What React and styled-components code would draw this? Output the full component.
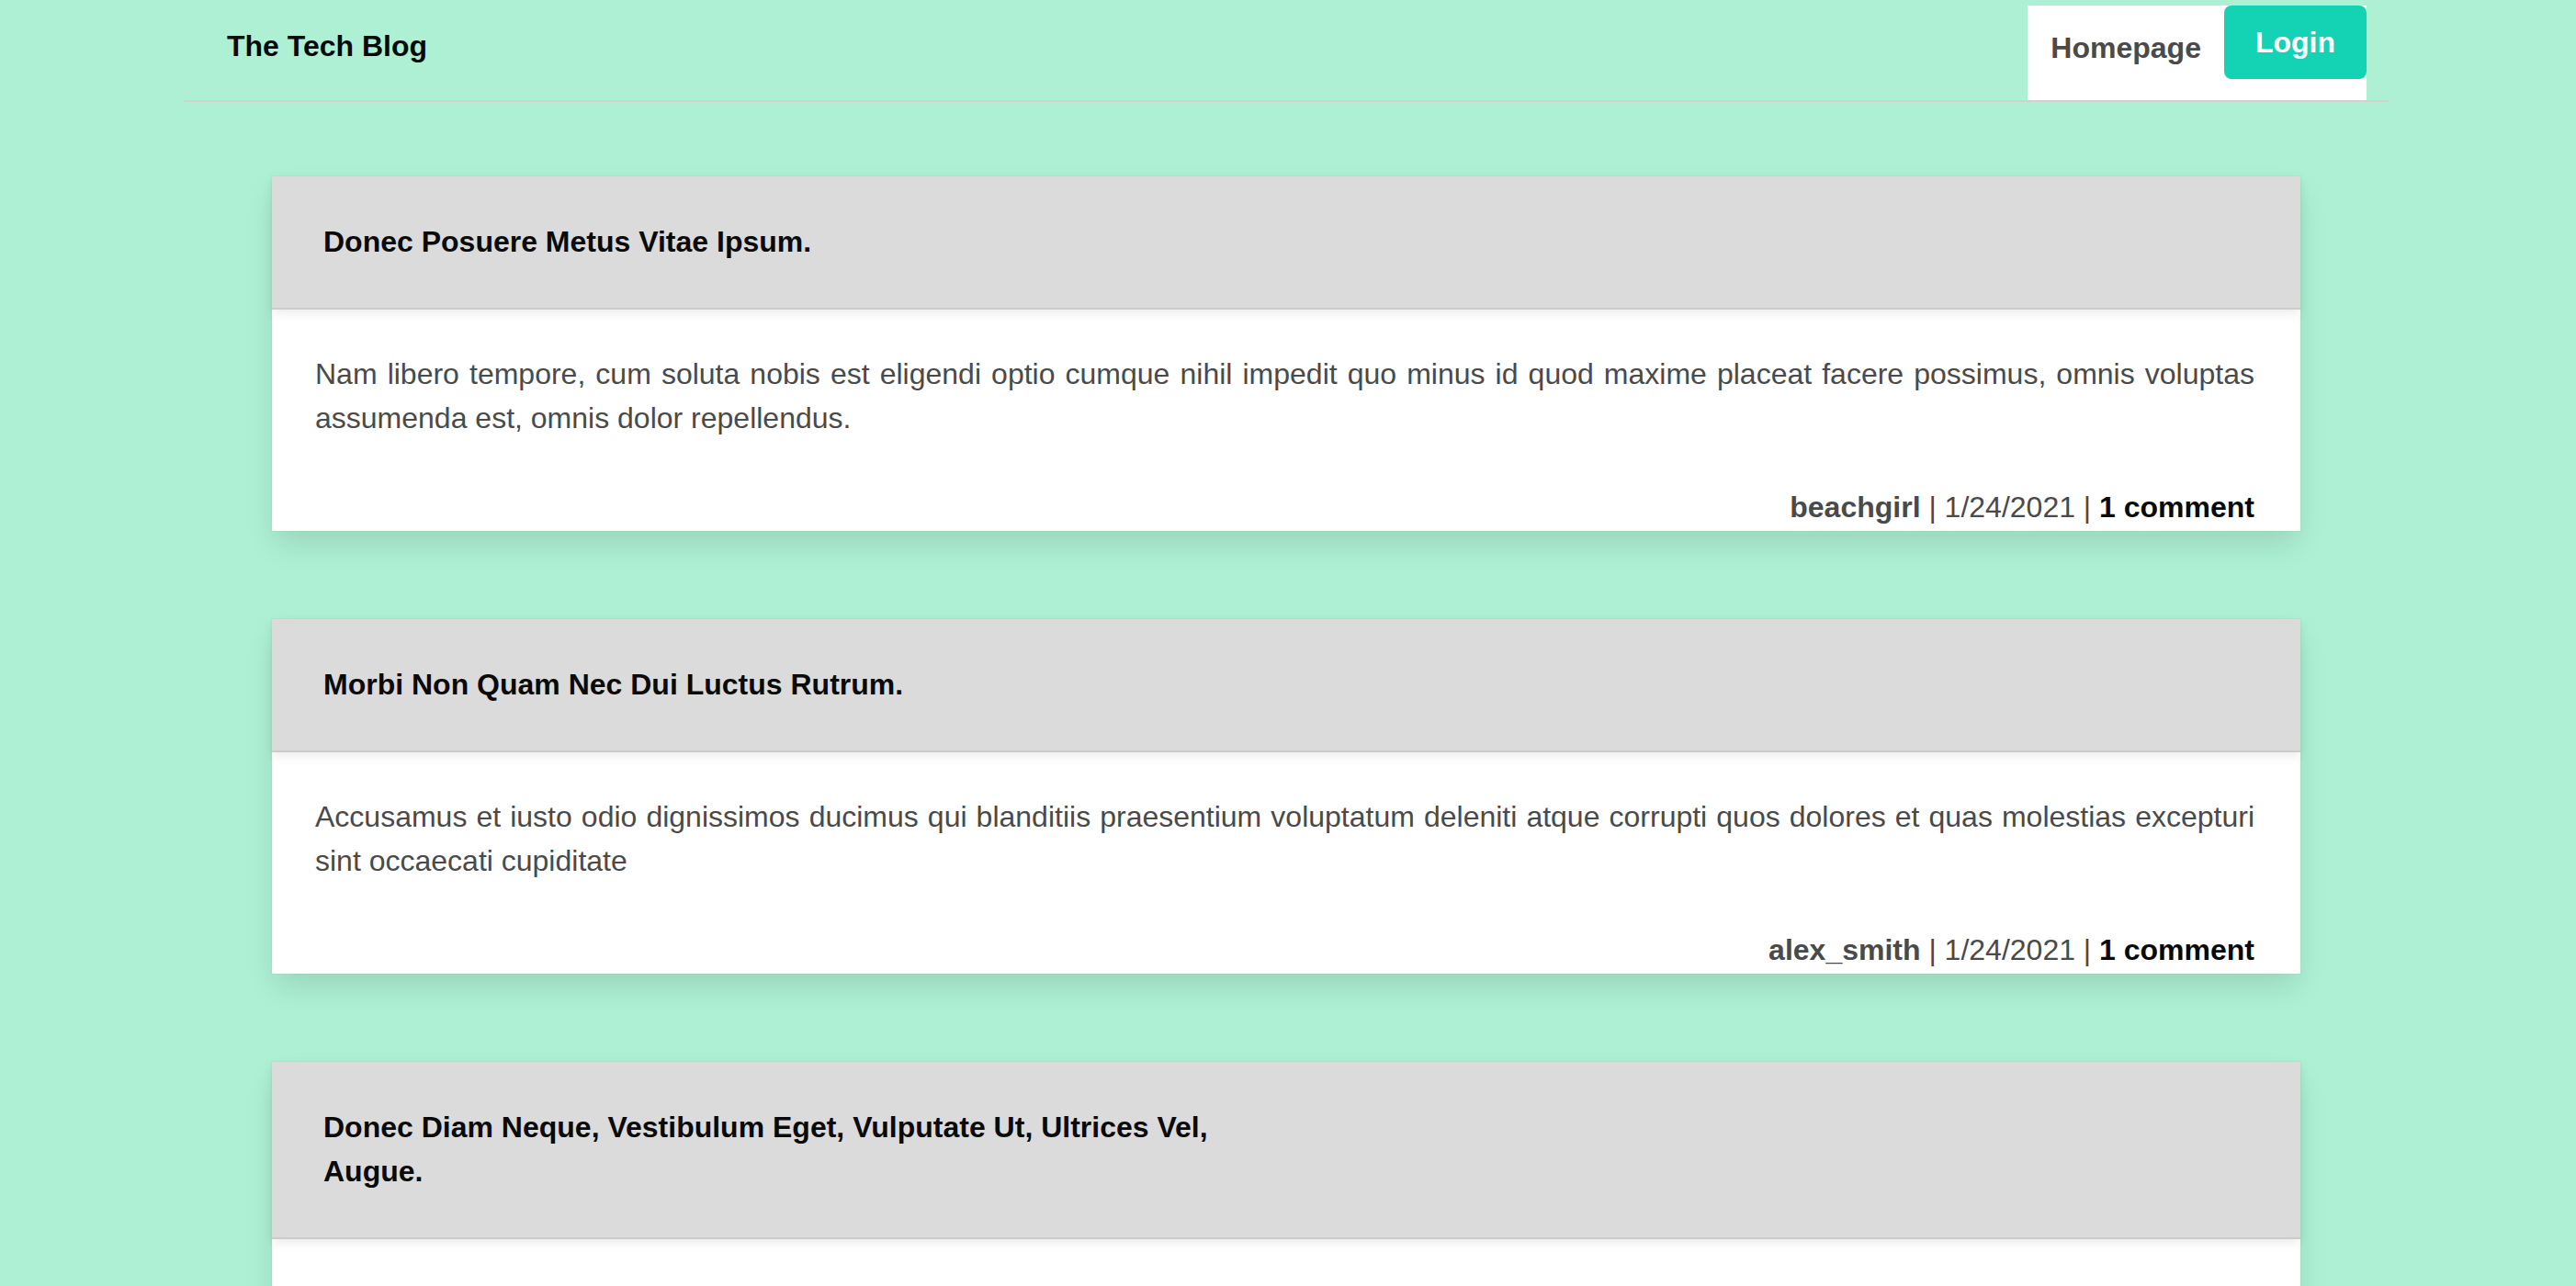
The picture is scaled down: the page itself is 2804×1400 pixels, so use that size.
import React from 'react';
import styled, { createGlobalStyle } from 'styled-components';

const GlobalStyle = createGlobalStyle`
  html, body {
    margin: 0;
    padding: 0;
    background: #adf0d4;
  }
  body {
    font-family: 'Liberation Sans', Arial, Helvetica, sans-serif;
    font-size: 32px;
    line-height: 48px;
    color: #4a4a4a;
  }
  * {
    box-sizing: border-box;
  }
`;

const Page = styled.div`
  min-height: 1400px;
  background: #adf0d4;
  padding: 0 4px 96px 0;
`;

const TopBar = styled.header`
  width: 2400px;
  height: 111px;
  margin: 0 auto;
  display: flex;
  justify-content: space-between;
  align-items: flex-start;
  border-bottom: 2px solid #d2d0d0;
`;

const Brand = styled.a`
  padding: 26px 0 0 47px;
  font-size: 32px;
  font-weight: 700;
  color: #0a0a0a;
  text-decoration: none;
`;

const Nav = styled.nav`
  display: flex;
  align-items: flex-start;
  margin: 6px 24px 0 0;
  height: 103px;
  background: #ffffff;
`;

const NavLink = styled.a`
  padding: 22px 25px 0 25px;
  font-weight: 700;
  color: #4a4a4a;
  text-decoration: none;
`;

const LoginButton = styled.button`
  height: 80px;
  padding: 16px 34px;
  border: 0;
  border-radius: 8px;
  background: #14d2b4;
  color: #ffffff;
  font-family: inherit;
  font-size: 32px;
  line-height: 48px;
  font-weight: 700;
  cursor: pointer;
`;

const Feed = styled.main`
  width: 2208px;
  margin: 81px auto 0;
  display: flex;
  flex-direction: column;
  gap: 96px;
`;

const Card = styled.article`
  background: #ffffff;
  box-shadow: 0 16px 32px -4px rgba(10, 10, 10, 0.12), 0 0 0 1px rgba(10, 10, 10, 0.02);
`;

const CardHeader = styled.div`
  position: relative;
  background: #dbdbdb;
  padding: 47px 54px 48px 56px;
  border-bottom: 2px solid #cbcbcb;
  box-shadow: 0 4px 10px rgba(10, 10, 10, 0.08);
`;

const CardTitle = styled.h2`
  margin: 0;
  max-width: 50%;
  font-size: 32px;
  line-height: 48px;
  font-weight: 700;
  color: #0a0a0a;
`;

const CardBody = styled.div`
  padding: 46px 50px 2px 47px;
`;

const Excerpt = styled.p`
  margin: 0 0 49px;
  text-align: justify;
  color: #4a4a4a;
`;

const Meta = styled.div`
  text-align: right;
  color: #4a4a4a;
`;

const Author = styled.strong`
  font-weight: 700;
  color: #4a4a4a;
`;

const Comments = styled.strong`
  font-weight: 700;
  color: #0a0a0a;
`;

const posts = [
  {
    title: 'Donec Posuere Metus Vitae Ipsum.',
    body: 'Nam libero tempore, cum soluta nobis est eligendi optio cumque nihil impedit quo minus id quod maxime placeat facere possimus, omnis voluptas assumenda est, omnis dolor repellendus.',
    author: 'beachgirl',
    date: '1/24/2021',
    comments: 1,
  },
  {
    title: 'Morbi Non Quam Nec Dui Luctus Rutrum.',
    body: 'Accusamus et iusto odio dignissimos ducimus qui blanditiis praesentium voluptatum deleniti atque corrupti quos dolores et quas molestias excepturi sint occaecati cupiditate',
    author: 'alex_smith',
    date: '1/24/2021',
    comments: 1,
  },
  {
    title: 'Donec Diam Neque, Vestibulum Eget, Vulputate Ut, Ultrices Vel, Augue.',
    body: 'Temporibus autem quibusdam et aut officiis debitis aut rerum necessitatibus saepe eveniet ut et voluptates repudiandae sint et molestiae non recusandae.',
    author: 'beachgirl',
    date: '1/24/2021',
    comments: 1,
  },
];

const PostCard = ({ post }) => (
  <Card>
    <CardHeader>
      <CardTitle>{post.title}</CardTitle>
    </CardHeader>
    <CardBody>
      <Excerpt>{post.body}</Excerpt>
      <Meta>
        <Author>{post.author}</Author> | {post.date} |{' '}
        <Comments>{post.comments} comment{post.comments === 1 ? '' : 's'}</Comments>
      </Meta>
    </CardBody>
  </Card>
);

const App = () => {
  return (
    <Page>
      <GlobalStyle />
      <TopBar>
        <Brand href="#">The Tech Blog</Brand>
        <Nav>
          <NavLink href="#">Homepage</NavLink>
          <LoginButton>Login</LoginButton>
        </Nav>
      </TopBar>

      <Feed>
        {posts.map((post, i) => (
          <PostCard key={i} post={post} />
        ))}
      </Feed>
    </Page>
  );
};

export default App;
